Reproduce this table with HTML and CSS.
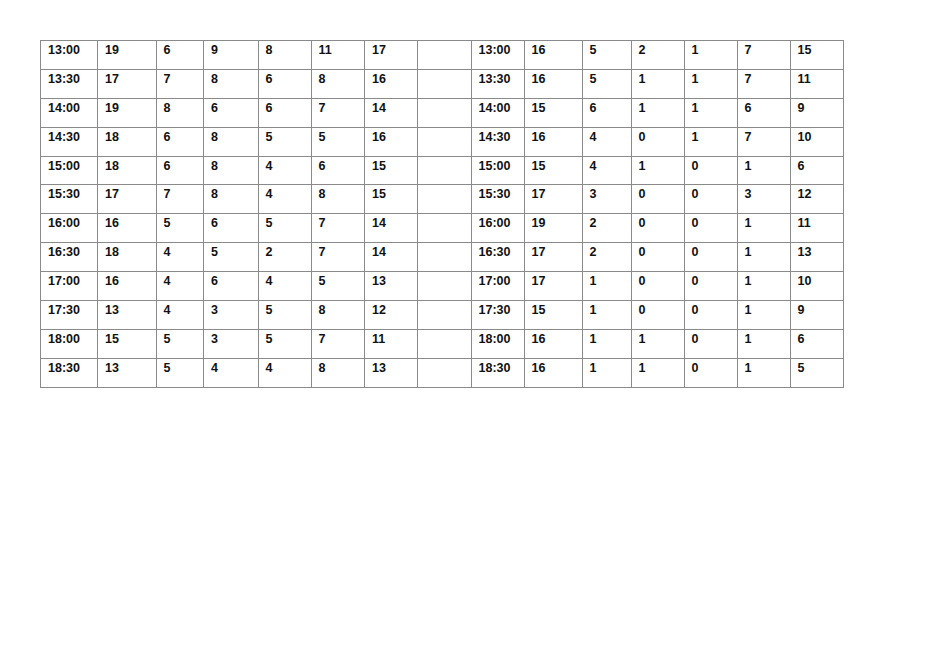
FILE: index.html
```html
<!DOCTYPE html>
<html>
<head>
<meta charset="utf-8">
<link rel="stylesheet" href="styles.css">
</head>
<body>
<table class="grid">
<colgroup>
<col class="c1"><col class="c2"><col class="c3"><col class="c4"><col class="c5"><col class="c6"><col class="c7"><col class="c8">
<col class="c9"><col class="c10"><col class="c11"><col class="c12"><col class="c13"><col class="c14"><col class="c15">
</colgroup>
<tbody>
<tr><td>13:00</td><td>19</td><td>6</td><td>9</td><td>8</td><td>11</td><td>17</td><td></td><td>13:00</td><td>16</td><td>5</td><td>2</td><td>1</td><td>7</td><td>15</td></tr>
<tr><td>13:30</td><td>17</td><td>7</td><td>8</td><td>6</td><td>8</td><td>16</td><td></td><td>13:30</td><td>16</td><td>5</td><td>1</td><td>1</td><td>7</td><td>11</td></tr>
<tr><td>14:00</td><td>19</td><td>8</td><td>6</td><td>6</td><td>7</td><td>14</td><td></td><td>14:00</td><td>15</td><td>6</td><td>1</td><td>1</td><td>6</td><td>9</td></tr>
<tr><td>14:30</td><td>18</td><td>6</td><td>8</td><td>5</td><td>5</td><td>16</td><td></td><td>14:30</td><td>16</td><td>4</td><td>0</td><td>1</td><td>7</td><td>10</td></tr>
<tr><td>15:00</td><td>18</td><td>6</td><td>8</td><td>4</td><td>6</td><td>15</td><td></td><td>15:00</td><td>15</td><td>4</td><td>1</td><td>0</td><td>1</td><td>6</td></tr>
<tr><td>15:30</td><td>17</td><td>7</td><td>8</td><td>4</td><td>8</td><td>15</td><td></td><td>15:30</td><td>17</td><td>3</td><td>0</td><td>0</td><td>3</td><td>12</td></tr>
<tr><td>16:00</td><td>16</td><td>5</td><td>6</td><td>5</td><td>7</td><td>14</td><td></td><td>16:00</td><td>19</td><td>2</td><td>0</td><td>0</td><td>1</td><td>11</td></tr>
<tr><td>16:30</td><td>18</td><td>4</td><td>5</td><td>2</td><td>7</td><td>14</td><td></td><td>16:30</td><td>17</td><td>2</td><td>0</td><td>0</td><td>1</td><td>13</td></tr>
<tr><td>17:00</td><td>16</td><td>4</td><td>6</td><td>4</td><td>5</td><td>13</td><td></td><td>17:00</td><td>17</td><td>1</td><td>0</td><td>0</td><td>1</td><td>10</td></tr>
<tr><td>17:30</td><td>13</td><td>4</td><td>3</td><td>5</td><td>8</td><td>12</td><td></td><td>17:30</td><td>15</td><td>1</td><td>0</td><td>0</td><td>1</td><td>9</td></tr>
<tr><td>18:00</td><td>15</td><td>5</td><td>3</td><td>5</td><td>7</td><td>11</td><td></td><td>18:00</td><td>16</td><td>1</td><td>1</td><td>0</td><td>1</td><td>6</td></tr>
<tr><td>18:30</td><td>13</td><td>5</td><td>4</td><td>4</td><td>8</td><td>13</td><td></td><td>18:30</td><td>16</td><td>1</td><td>1</td><td>0</td><td>1</td><td>5</td></tr>
</tbody>
</table>
</body>
</html>
```
FILE: styles.css
```css
html, body {
  margin: 0;
  padding: 0;
  background: #ffffff;
}
body {
  padding: 40px 0 0 40px;
  font-family: "Liberation Sans", Arial, sans-serif;
}
.grid {
  border-collapse: collapse;
  table-layout: fixed;
  width: 803px;
}
.grid td {
  border: 1px solid #8a8a8a;
  height: 28px;
  padding: 1px 0 0 7px;
  vertical-align: top;
  font-size: 12.5px;
  font-weight: bold;
  color: #111;
  line-height: 16px;
  box-sizing: border-box;
}
.grid tr { height: 28.9px; }
.c1 { width: 57px; }
.c2 { width: 58.5px; }
.c3 { width: 47.5px; }
.c4 { width: 54.5px; }
.c5 { width: 53px; }
.c6 { width: 53.5px; }
.c7 { width: 53px; }
.c8 { width: 53.5px; }
.c9 { width: 53px; }
.c10 { width: 58px; }
.c11 { width: 49px; }
.c12 { width: 53px; }
.c13 { width: 53px; }
.c14 { width: 53px; }
.c15 { width: 53px; }
```
